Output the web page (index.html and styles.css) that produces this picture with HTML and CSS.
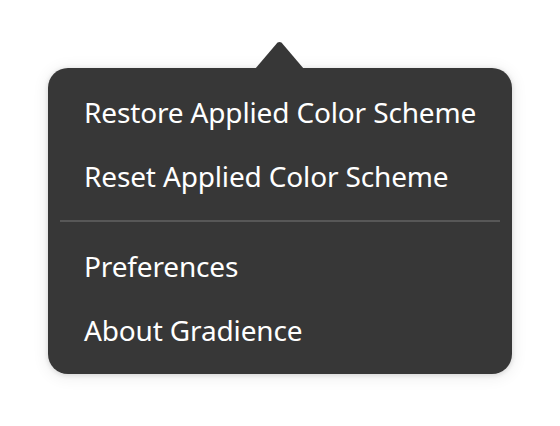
FILE: index.html
```html
<!DOCTYPE html>
<html>
<head>
<meta charset="utf-8">
<link rel="stylesheet" href="styles.css">
</head>
<body>
<div class="stage">
  <div class="popover">
    <div class="arrow"></div>
    <div class="section">
      <div class="item">Restore Applied Color Scheme</div>
      <div class="item">Reset Applied Color Scheme</div>
    </div>
    <div class="separator"></div>
    <div class="section">
      <div class="item">Preferences</div>
      <div class="item">About Gradience</div>
    </div>
  </div>
</div>
</body>
</html>
```
FILE: styles.css
```css
html, body {
  margin: 0;
  padding: 0;
  background: #ffffff;
}
.stage {
  width: 560px;
  height: 426px;
  box-sizing: border-box;
  padding: 68px 0 0 48px;
  display: flex;
  align-items: flex-start;
}
.popover {
  position: relative;
  width: 464px;
  box-sizing: border-box;
  padding: 12px;
  background: #373737;
  border-radius: 20px;
  box-shadow: 0 1px 4px 1px rgba(0,0,0,0.10), 0 2px 14px 4px rgba(0,0,0,0.05);
  font-family: "Noto Sans", sans-serif;
  font-size: 28px;
  letter-spacing: -0.15px;
  color: #ffffff;
}
.arrow {
  position: absolute;
  left: 207px;
  top: -26px;
  width: 49px;
  height: 27px;
  background: #373737;
  clip-path: polygon(46% 2%, 50% 0, 54% 2%, 100% 100%, 0 100%);
}
.section {
  display: flex;
  flex-direction: column;
}
.item {
  height: 64px;
  line-height: 64px;
  padding-left: 24px;
  white-space: nowrap;
}
.separator {
  height: 2px;
  margin: 12px 0;
  background: #575757;
}
```
